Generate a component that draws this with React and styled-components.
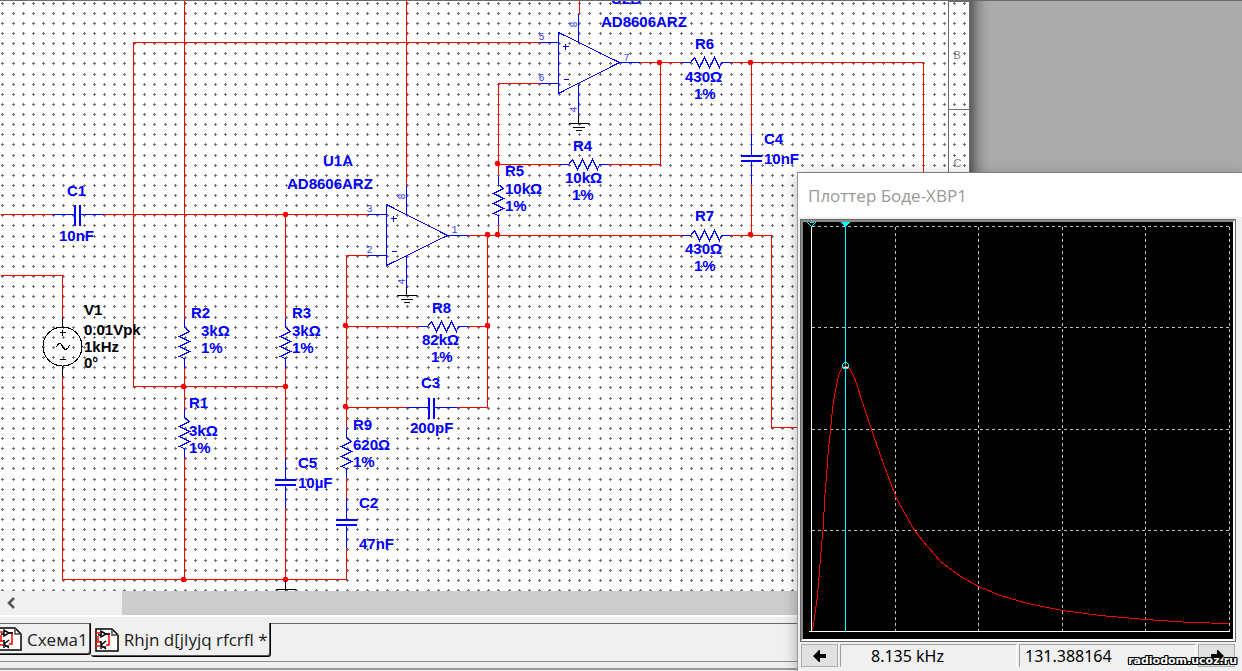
import React from "react";
import styled, { createGlobalStyle } from "styled-components";

const GlobalStyle = createGlobalStyle`
  * {
    box-sizing: border-box;
  }

  body {
    margin: 0;
    background: #f0f0f0;
    font-family: "Open Sans", "Noto Sans", sans-serif;
    color: #000;
  }
`;

const RED = "#ff0000";
const BLUE = "#0000ff";
const BLACK = "#000000";

function gridPath() {
  let d = "";
  for (let i = 0; i < 96; i++) {
    for (let j = 0; j < 59; j++) {
      const x = i === 0 ? 2 : Math.floor(3.15 + i * 10.118);
      const y = Math.floor(3.2 + j * 10.125);
      d += `M${x - 1} ${y}h3v1h-3zM${x} ${y - 1}h1v3h-1z`;
    }
  }
  return d;
}

const GRID = gridPath();

const WIRES = [
  "M0 214H52M102 214H367M0 275H62V317M62 376V579H346V547",
  "M539 42H133V386H285",
  "M184 0V318M184 366V408M184 457V579",
  "M285 214V318M285 366V460M285 507V579",
  "M367 255H346V427M346 477V498",
  "M406 0V185M346 326H418M467 326H487",
  "M346 407H408M456 407H487V235",
  "M467 235H681M498 235V225M498 174V83H539",
  "M579 0V12M640 62H681M660 62V164H608M498 164H559",
  "M730 62H923V180M751 62V133M751 183V235M730 235H771V427H800",
];

const JUNCTIONS = [
  [285, 214], [345, 325], [487, 325], [345, 406], [183, 386], [285, 386],
  [183, 579], [285, 579], [487, 234], [497, 234], [497, 163], [659, 62],
  [750, 62], [750, 234],
];

const RESISTORS = [
  { x: 184, y: 318, vertical: true },
  { x: 184, y: 408, vertical: true },
  { x: 285, y: 318, vertical: true },
  { x: 346, y: 428, vertical: true },
  { x: 498, y: 175, vertical: true },
  { x: 418, y: 326 },
  { x: 559, y: 164 },
  { x: 681, y: 62 },
  { x: 681, y: 235 },
];

const CAPACITORS = [
  { x: 52, y: 214 },
  { x: 406, y: 407 },
  { x: 285, y: 457, vertical: true },
  { x: 346, y: 497, vertical: true },
  { x: 751, y: 133, vertical: true },
];

const LABELS = [
  [67, 196, "C1"], [59, 241, "10nF"],
  [191, 318, "R2"], [201, 336, "3kΩ"], [201, 353, "1%"],
  [189, 408, "R1"], [189, 436, "3kΩ"], [189, 453, "1%"],
  [292, 318, "R3"], [292, 336, "3kΩ"], [292, 353, "1%"],
  [323, 166, "U1A"], [287, 189, "AD8606ARZ"],
  [505, 176, "R5"], [505, 194, "10kΩ"], [505, 211, "1%"],
  [573, 151, "R4"], [565, 183, "10kΩ"], [572, 200, "1%"],
  [695, 49, "R6"], [685, 82, "430Ω"], [694, 99, "1%"],
  [611, 4, "U2B"], [601, 27, "AD8606ARZ"],
  [695, 221, "R7"], [685, 254, "430Ω"], [694, 271, "1%"],
  [764, 144, "C4"], [764, 164, "10nF"],
  [432, 313, "R8"], [422, 345, "82kΩ"], [431, 362, "1%"],
  [421, 388, "C3"], [410, 433, "200pF"],
  [353, 430, "R9"], [353, 450, "620Ω"], [353, 467, "1%"],
  [298, 468, "C5"], [298, 488, "10µF"],
  [359, 508, "C2"], [359, 549, "47nF"],
];

const SOURCE_LABELS = [
  [84, 315, "V1"], [84, 335, "0.01Vpk"], [84, 352, "1kHz"], [84, 368, "0°"],
];

const CURVE = [
  [812, 630], [814, 617], [817, 595], [819, 570], [821, 545], [823, 525],
  [824, 500], [826, 476], [828, 448], [830, 430], [832, 408], [835, 390],
  [838, 375], [841, 368], [845, 365], [850, 369], [855, 380], [862, 402],
  [871, 429], [880, 455], [890, 482], [895, 496], [905, 514], [914, 530],
  [922, 540], [940, 561], [960, 576], [978, 586], [1000, 595], [1027, 603],
  [1062, 610], [1100, 615], [1145, 619], [1190, 622], [1229, 623],
];

function Resistor({ x, y, vertical }) {
  const turn = vertical ? `translate(${x} ${y}) matrix(0 1 1 0 0 0)` : `translate(${x} ${y}) scale(1 -1)`;
  return (
    <path
      transform={turn}
      stroke={BLUE}
      d="M0 0H9L13 5L18 -5L23 5L28 -5L33 5L38 -5L40 0H49"
    />
  );
}

function Capacitor({ x, y, vertical }) {
  return (
    <g transform={`translate(${x} ${y})${vertical ? " rotate(90)" : ""}`} stroke={BLUE}>
      <path d="M0 0H22M28 0H50" />
      <path strokeWidth="2" d="M22.5 -10V11M27.5 -10V11" />
    </g>
  );
}

function OpAmp({ x, y, tip, pins }) {
  return (
    <g transform={`translate(${x} ${y})`}>
      <path
        stroke={BLUE}
        d={`M0 0L61 ${tip}L0 61ZM-19 10H0M-19 51H0M61 ${tip}H81M20 -19V10M20 51V82M4 14H10M7 11V17M5 47H10`}
      />
      <path stroke={BLACK} d="M20 82V91M10 91H30M14 95H26M17 98H23" />
      <PinText x="-20" y="7">{pins[0]}</PinText>
      <PinText x="-20" y="48">{pins[1]}</PinText>
      <PinText x="65" y="28">{pins[2]}</PinText>
      <PinText transform="translate(18 -5) rotate(-90)">8</PinText>
      <PinText transform="translate(18 80) rotate(-90)">4</PinText>
    </g>
  );
}

function Schematic() {
  return (
    <SheetSvg viewBox="0 1 970 590" role="img" aria-label="Схема">
      <rect width="970" height="600" fill="#fff" />
      <path d={GRID} fill="#6e6e6e" shapeRendering="crispEdges" />
      <g transform="translate(0.5 0.5)" fill="none">
        <g stroke="#6e6e6e" shapeRendering="crispEdges">
          <path d="M948 600V1H969V600M948 109H969" />
        </g>
        <FrameText x="953" y="58">B</FrameText>
        <FrameText x="953" y="166">C</FrameText>
        <g shapeRendering="crispEdges">
          {WIRES.map((d) => (
            <path key={d} d={d} stroke={RED} />
          ))}
          {RESISTORS.map((r) => (
            <Resistor key={`${r.x}-${r.y}`} {...r} />
          ))}
          {CAPACITORS.map((c) => (
            <Capacitor key={`${c.x}-${c.y}`} {...c} />
          ))}
          <OpAmp x={386} y={204} tip={31} pins={["3", "2", "1"]} />
          <OpAmp x={558} y={32} tip={30} pins={["5", "6", "7"]} />
        </g>
        {JUNCTIONS.map(([x, y]) => (
          <circle key={`${x}-${y}`} cx={x} cy={y} r="2.7" fill={RED} />
        ))}
        <g stroke={BLACK} shapeRendering="crispEdges">
          <circle cx="62" cy="346" r="19.5" />
          <path d="M62 317V327M62 366V376M59 332H65M62 329V335M59 359H65M285 579V590M275 589H295" />
          <path d="M56 347C58 341 61 343 62 346S66 351 69 345" />
        </g>
      </g>
      {LABELS.map(([x, y, text]) => (
        <PartText key={`${x}-${y}`} x={x} y={y}>{text}</PartText>
      ))}
      {SOURCE_LABELS.map(([x, y, text]) => (
        <PartText key={y} x={x} y={y} $color={BLACK}>{text}</PartText>
      ))}
    </SheetSvg>
  );
}

function SheetIcon() {
  return (
    <svg width="24" height="24" viewBox="0 0 24 24" fill="none" aria-hidden="true">
      <path d="M1 1H17L23 7V23H1Z" fill="#fff" stroke="#000" strokeWidth="1.5" />
      <path d="M17 1V7H23" stroke="#444" strokeWidth="1.5" />
      <path d="M0 5H5M3 8V14H1M3 14H6M11 6H14V17H11M0 18H5" stroke="#f00" strokeWidth="1.5" />
      <path d="M6 3V9L11 6ZM11 6H15M3 7H6" stroke="#000" strokeWidth="1.5" />
      <path d="M6 13V21M6 17L11 13M6 17L11 21M7 19L11 19" stroke="#000" strokeWidth="1.5" />
    </svg>
  );
}

function BodePlot() {
  return (
    <PlotSvg viewBox="803 222 430 417" role="img" aria-label="АЧХ">
      <g transform="translate(0.5 0.5)" fill="none" shapeRendering="crispEdges">
        <path
          stroke="#c0c0c0"
          strokeDasharray="3 3"
          d="M811 226H1229M811 327H1229M811 429H1229M811 530H1229M895 226V631M978 226V631M1062 226V631M1145 226V631M1229 226V631"
        />
        <path stroke="#fff" d="M811 226V631M808 631H1229" />
        <path stroke="#0ff" d="M845 224V631" />
        <polyline points={CURVE.map((p) => p.join(",")).join(" ")} stroke={RED} />
        <path d="M841 222H849L845 226Z" fill="#0ff" stroke="#0ff" />
        <path d="M807 222L811 226L815 222M809 222H813" stroke="#0ff" />
        <circle cx="845" cy="365" r="3" stroke="#0ff" />
        <path d="M843 367H847" stroke="#fff" />
      </g>
    </PlotSvg>
  );
}

function Arrow({ right }) {
  return (
    <svg width="14" height="12" viewBox="0 0 14 12" aria-hidden="true">
      <path transform={right ? "matrix(-1 0 0 1 14 0)" : undefined} d="M0 6L6 0H7V4H13V8H7V12H6Z" />
    </svg>
  );
}

function App() {
  return (
    <Desktop>
      <GlobalStyle />
      <Workspace>
        <Schematic />
        <Backdrop />
      </Workspace>
      <ScrollBar>
        <ScrollButton aria-label="Прокрутить влево">
          <svg width="10" height="12" viewBox="0 0 10 12" fill="none" aria-hidden="true">
            <path d="M8 1L3 6L8 11" stroke="#555" strokeWidth="2.5" />
          </svg>
        </ScrollButton>
        <ScrollThumb />
      </ScrollBar>
      <TabStrip>
        <Tab>
          <SheetIcon />
          Схема1
        </Tab>
        <Tab $active>
          <SheetIcon />
          Rhjn d[jlyjq rfcrfl *
        </Tab>
        <TabRest />
      </TabStrip>
      <StatusEdge />
      <BodeWindow>
        <TitleBar>Плоттер Боде-XBP1</TitleBar>
        <PlotFrame>
          <PlotInset>
            <BodePlot />
          </PlotInset>
        </PlotFrame>
        <CursorBar>
          <CursorButton aria-label="Курсор влево">
            <Arrow />
          </CursorButton>
          <Readout $indent="30px">8.135 kHz</Readout>
          <Readout $indent="5px">131.388164</Readout>
          <CursorButton aria-label="Курсор вправо">
            <Arrow right />
          </CursorButton>
        </CursorBar>
      </BodeWindow>
      <Watermark>radiodom.ucoz.ru</Watermark>
    </Desktop>
  );
}

const Desktop = styled.main`
  position: relative;
  display: flex;
  flex-direction: column;
  min-height: 100vh;
  overflow: hidden;
`;

const Workspace = styled.section`
  display: flex;
  overflow: hidden;
  border-top: 1px solid #696969;
`;

const SheetSvg = styled.svg`
  display: block;
  flex: none;
  width: 970px;
  height: 590px;
`;

const Backdrop = styled.div`
  flex: 1;
  background: linear-gradient(to right, #5a5a5a, #8c8c8c 8px, #a0a0a0 14px, #ababab 20px);
`;

const PartText = styled.text`
  font: bold 15px "Liberation Sans", Arial, sans-serif;
  fill: ${(props) => props.$color || BLUE};
`;

const PinText = styled.text`
  font: 10px "Liberation Mono", monospace;
  fill: #3c3cff;
`;

const FrameText = styled.text`
  font: 11px "Liberation Sans", Arial, sans-serif;
  fill: #808080;
`;

const ScrollBar = styled.div`
  display: flex;
  height: 24px;
  background: #f0f0f0;
`;

const ScrollButton = styled.button`
  display: flex;
  align-items: center;
  width: 122px;
  padding: 0 0 0 6px;
  border: 0;
  background: none;
`;

const ScrollThumb = styled.div`
  flex: 1;
  background: #cdcdcd;
`;

const TabStrip = styled.nav`
  display: flex;
  align-items: flex-start;
  height: 47px;
  margin-left: -6px;
  padding-top: 6px;
  border-top: 2px solid #fff;
  border-bottom: 1px solid #8c8c8c;
`;

const Tab = styled.button`
  display: flex;
  align-items: center;
  gap: 5px;
  height: ${(props) => (props.$active ? "34px" : "32px")};
  padding: 0 2px 0 4px;
  border: 0 solid #000;
  border-top: ${(props) => (props.$active ? "0" : "1px solid #696969")};
  border-right-width: 1px;
  border-bottom-width: 1px;
  border-radius: 0 0 3px 3px;
  background: #f0f0f0;
  box-shadow: inset -1px -1px #555;
  color: #1a1a1a;
  font: 17px "Open Sans", "Noto Sans", sans-serif;
  white-space: nowrap;
`;

const TabRest = styled.div`
  flex: 1;
  border-top: 1px solid #696969;
`;

const StatusEdge = styled.div`
  flex: 1;
  margin-top: 6px;
  border-top: 2px solid #9a9a9a;
`;

const BodeWindow = styled.section`
  position: absolute;
  top: 172px;
  right: 0;
  bottom: 0;
  left: 797px;
  border-top: 1px solid #808080;
  border-left: 1px solid #999;
  background: #f0f0f0;
  box-shadow: 0 4px 14px rgba(0, 0, 0, 0.3);
`;

const TitleBar = styled.header`
  display: flex;
  align-items: center;
  height: 44px;
  padding-left: 10px;
  background: #fff;
  color: #999;
  font-size: 17px;
`;

const PlotFrame = styled.div`
  margin: 2px 6px 2px 2px;
  border: 1px solid #696969;
`;

const PlotInset = styled.div`
  border: 2px solid #fff;
  border-top-color: #8c8c8c;
  border-left-color: #8c8c8c;
  background: #000;
`;

const PlotSvg = styled.svg`
  display: block;
  width: 100%;
`;

const CursorBar = styled.footer`
  display: flex;
  gap: 2px;
  height: 23px;
  margin: 0 7px 0 3px;
`;

const CursorButton = styled.button`
  display: flex;
  align-items: center;
  justify-content: center;
  width: 37px;
  padding: 0;
  border: 1px solid #adadad;
  background: #e1e1e1;
`;

const Readout = styled.output`
  flex: 1 1 0;
  border-top: 1px solid #a0a0a0;
  border-left: 1px solid #a0a0a0;
  border-right: 1px solid #fff;
  font: 16px/22px "Noto Sans", sans-serif;
  text-indent: ${(props) => props.$indent};
`;

const Watermark = styled.span`
  position: absolute;
  right: 5px;
  bottom: 2px;
  color: #fff;
  font: bold 11px/16px "DejaVu Sans", sans-serif;
  text-shadow: 1px 0 #000, -1px 0 #000, 0 1px #000, 0 -1px #000, 1px 1px #000,
    -1px -1px #000, 1px -1px #000, -1px 1px #000;
`;

export default App;
